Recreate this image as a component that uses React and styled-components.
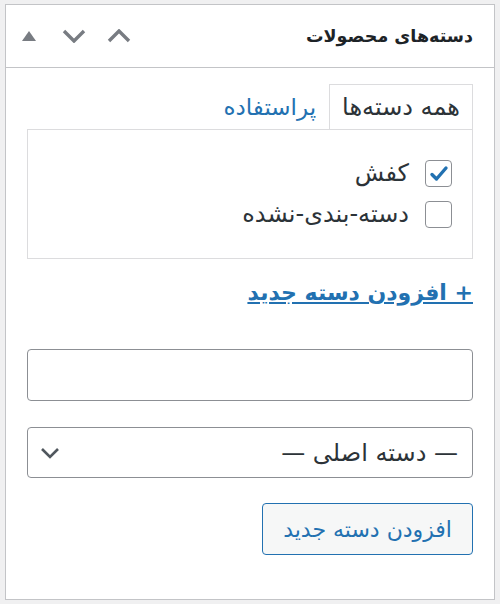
import React, { useState } from 'react';
import styled, { createGlobalStyle } from 'styled-components';

const GlobalStyle = createGlobalStyle`
  html, body {
    margin: 0;
    padding: 0;
    background: #f0f0f1;
  }
  body {
    font-family: 'DejaVu Sans', Tahoma, sans-serif;
    color: #2c3338;
  }
`;

const Page = styled.div`
  padding: 4px 5px;
`;

const MetaBox = styled.div`
  direction: rtl;
  width: 488px;
  height: 594px;
  background: #fff;
  border: 1px solid #c3c4c7;
  display: flex;
  flex-direction: column;
`;

const Header = styled.div`
  display: flex;
  align-items: center;
  justify-content: space-between;
  height: 62px;
  padding: 0 21px 0 0;
  border-bottom: 1px solid #c3c4c7;
`;

const Title = styled.h2`
  margin: 0;
  font-size: 17.5px;
  font-weight: 700;
  color: #1d2327;
`;

const HandleGroup = styled.div`
  display: flex;
  align-items: center;
  direction: ltr;
`;

const HandleButton = styled.button`
  width: 45px;
  height: 36px;
  padding: 0;
  border: 0;
  background: none;
  display: flex;
  align-items: center;
  justify-content: center;
  color: #787c82;
`;

const Body = styled.div`
  padding: 16px 21px 0;
  display: flex;
  flex-direction: column;
`;

const TabList = styled.div`
  display: flex;
  align-items: flex-end;
  margin-bottom: -1px;
`;

const Tab = styled.a`
  display: block;
  height: 44px;
  line-height: 44px;
  padding: 0 12px;
  font-size: ${p => (p.$active ? '24px' : '23px')};
  text-decoration: none;
  border: 1px solid ${p => (p.$active ? '#dcdcde' : 'transparent')};
  border-bottom: 1px solid ${p => (p.$active ? '#fff' : 'transparent')};
  background: ${p => (p.$active ? '#fff' : 'transparent')};
  color: ${p => (p.$active ? '#2c3338' : '#2271b1')};
`;

const TabPanel = styled.div`
  border: 1px solid #dcdcde;
  height: 130px;
  padding: 30px 20px 0;
  box-sizing: border-box;
  display: flex;
  flex-direction: column;
  gap: 14px;
`;

const Row = styled.label`
  display: flex;
  align-items: center;
  height: 27px;
  gap: 16px;
  font-size: 24px;
  line-height: 27px;
  color: #2c3338;
`;

const Box = styled.span`
  width: 27px;
  height: 27px;
  box-sizing: border-box;
  border: 1px solid #8c8f94;
  border-radius: 4px;
  display: flex;
  align-items: center;
  justify-content: center;
  background: #fff;
  flex-shrink: 0;
`;

const AddLink = styled.a`
  margin-top: 22px;
  font-size: 22px;
  line-height: 24px;
  font-weight: 700;
  color: #2271b1;
  text-decoration: underline;
  align-self: flex-start;
`;

const TextInput = styled.input`
  margin-top: 44px;
  height: 52px;
  box-sizing: border-box;
  border: 1px solid #8c8f94;
  border-radius: 4px;
  font-size: 17px;
  font-family: inherit;
  padding: 0 12px;
`;

const SelectBox = styled.div`
  margin-top: 26px;
  height: 51px;
  box-sizing: border-box;
  border: 1px solid #8c8f94;
  border-radius: 4px;
  display: flex;
  align-items: center;
  justify-content: space-between;
  padding: 0 14px 0 12px;
  font-size: 24px;
  color: #2c3338;
`;

const SubmitButton = styled.button`
  margin-top: 25px;
  align-self: flex-start;
  height: 52px;
  padding: 0 20px;
  background: #f6f7f7;
  border: 1px solid #2271b1;
  border-radius: 4px;
  color: #2271b1;
  font-size: 22px;
  font-family: inherit;
`;

const Checkbox = ({ checked, onToggle, children }) => (
  <Row onClick={onToggle}>
    <Box>
      {checked && (
        <svg width="20" height="20" viewBox="0 0 20 20">
          <path d="M3 10.5l4.5 4.5L17 4" fill="none" stroke="#2271b1" strokeWidth="3.4" strokeLinecap="round" strokeLinejoin="round" />
        </svg>
      )}
    </Box>
    <span>{children}</span>
  </Row>
);

const App = () => {
  const [cats, setCats] = useState([
    { id: 1, name: 'کفش', checked: true },
    { id: 2, name: 'دسته-بندی-نشده', checked: false },
  ]);

  const toggle = id =>
    setCats(cats.map(c => (c.id === id ? { ...c, checked: !c.checked } : c)));

  return (
    <Page>
      <GlobalStyle />
      <MetaBox>
        <Header>
          <Title>دسته‌های محصولات</Title>
          <HandleGroup>
            <HandleButton>
              <svg width="14" height="10" viewBox="0 0 14 10">
                <path d="M7 0L14 10H0z" fill="currentColor" />
              </svg>
            </HandleButton>
            <HandleButton>
              <svg width="24" height="14" viewBox="0 0 24 14">
                <path d="M2 2l10 10L22 2" fill="none" stroke="currentColor" strokeWidth="3.4" />
              </svg>
            </HandleButton>
            <HandleButton>
              <svg width="24" height="14" viewBox="0 0 24 14">
                <path d="M2 12L12 2l10 10" fill="none" stroke="currentColor" strokeWidth="3.4" />
              </svg>
            </HandleButton>
          </HandleGroup>
        </Header>
        <Body>
          <TabList>
            <Tab $active>همه دسته‌ها</Tab>
            <Tab>پراستفاده</Tab>
          </TabList>
          <TabPanel>
            {cats.map(c => (
              <Checkbox key={c.id} checked={c.checked} onToggle={() => toggle(c.id)}>
                {c.name}
              </Checkbox>
            ))}
          </TabPanel>
          <AddLink href="#">+ افزودن دسته جدید</AddLink>
          <TextInput type="text" />
          <SelectBox>
            <span>— دسته اصلی —</span>
            <svg width="20" height="12" viewBox="0 0 20 12">
              <path d="M2 2l8 8 8-8" fill="none" stroke="#50575e" strokeWidth="2.6" />
            </svg>
          </SelectBox>
          <SubmitButton>افزودن دسته جدید</SubmitButton>
        </Body>
      </MetaBox>
    </Page>
  );
};

export default App;
